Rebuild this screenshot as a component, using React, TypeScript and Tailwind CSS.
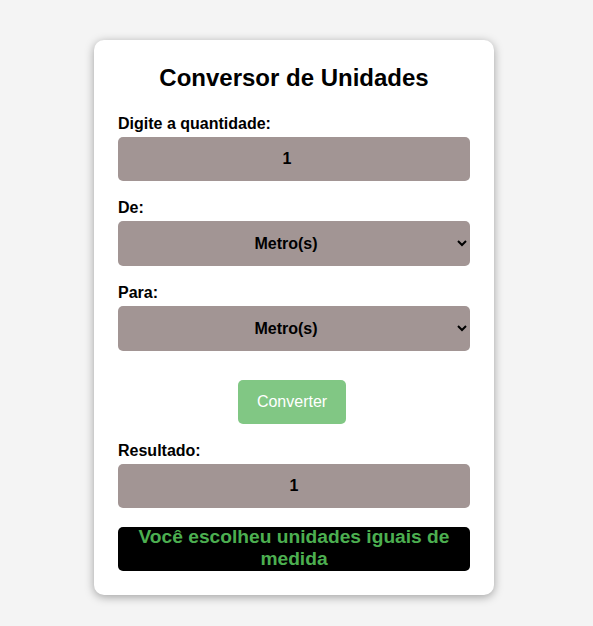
import * as React from "react";

const UNITS = ["Metro(s)", "Centímetro(s)", "Quilômetro(s)", "Milímetro(s)"];

const fieldCls =
  "block w-full h-[44px] rounded-[5px] bg-[#a29594] text-center text-[16px] font-bold text-black outline-none";

export default function App() {
  const [qty, setQty] = React.useState("1");
  const [from, setFrom] = React.useState(UNITS[0]);
  const [to, setTo] = React.useState(UNITS[0]);

  return (
    <div className="min-h-[626px] bg-[#f4f4f4] pt-10 font-['Liberation_Sans',Arial,sans-serif]">
      <div className="ml-[94px] w-[400px] rounded-[10px] bg-white px-6 pt-6 pb-6 shadow-[0_2px_10px_rgba(0,0,0,0.35)]">
        <h2 className="text-center text-[24px] font-bold leading-[28px] text-black">Conversor de Unidades</h2>

        <label className="mt-[23px] mb-1 block text-[16px] font-bold leading-[18px]">Digite a quantidade:</label>
        <input className={fieldCls + " pr-[14px]"} value={qty} onChange={(e) => setQty(e.target.value)} />

        <label className="mt-[18px] mb-1 block text-[16px] font-bold leading-[18px]">De:</label>
        <select
          className={fieldCls + " h-[45px] [text-align-last:center] pr-1"}
          value={from}
          onChange={(e) => setFrom(e.target.value)}
        >
          {UNITS.map((u) => (
            <option key={u}>{u}</option>
          ))}
        </select>

        <label className="mt-[18px] mb-1 block text-[16px] font-bold leading-[18px]">Para:</label>
        <select
          className={fieldCls + " h-[45px] [text-align-last:center] pr-1"}
          value={to}
          onChange={(e) => setTo(e.target.value)}
        >
          {UNITS.map((u) => (
            <option key={u}>{u}</option>
          ))}
        </select>

        <div className="mt-[29px] flex justify-center pr-1">
          <button className="h-[44px] w-[108px] rounded-[5px] bg-[#81c784] text-[16px] text-white">Converter</button>
        </div>

        <label className="mt-[18px] mb-1 block text-[16px] font-bold leading-[18px]">Resultado:</label>
        <div className={fieldCls + " flex items-center justify-center"}>1</div>

        <div className="mt-[19px] flex h-[44px] items-center justify-center rounded-[5px] bg-black pb-[2px] text-center text-[19.2px] font-bold leading-[22px] text-[#4caf50]">
          Você escolheu unidades iguais de medida
        </div>
      </div>
    </div>
  );
}
